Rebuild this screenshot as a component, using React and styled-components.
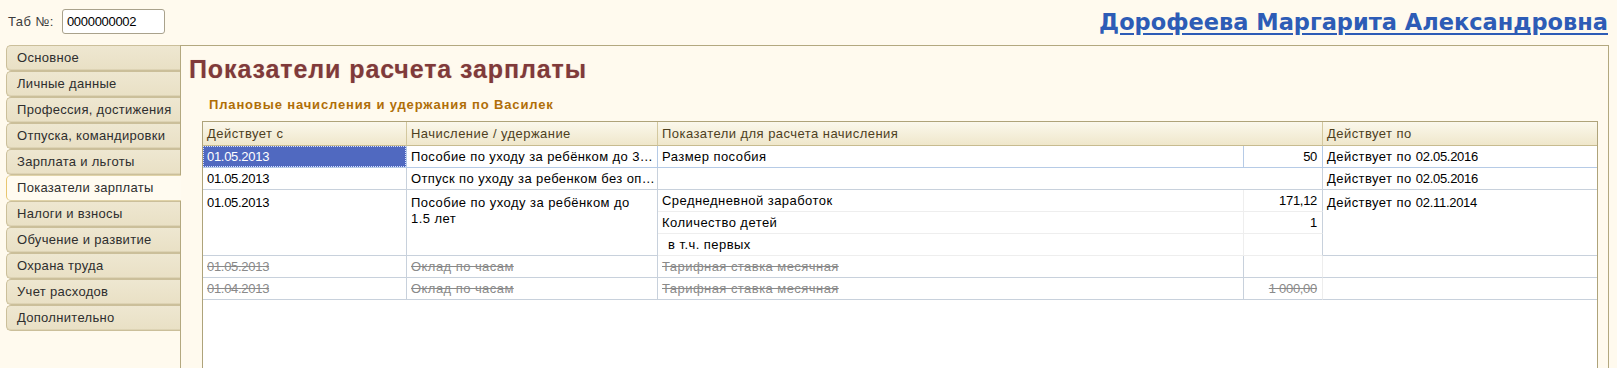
import styled, { createGlobalStyle, css } from 'styled-components'

const GlobalStyle = createGlobalStyle`
  html, body {
    margin: 0;
    padding: 0;
    background: #fffaee;
  }
  body {
    font-family: "Liberation Sans", Arial, sans-serif;
    font-size: 13px;
    letter-spacing: 0.45px;
    color: #000;
  }
`

const tabs = [
  'Основное',
  'Личные данные',
  'Профессия, достижения',
  'Отпуска, командировки',
  'Зарплата и льготы',
  'Показатели зарплаты',
  'Налоги и взносы',
  'Обучение и развитие',
  'Охрана труда',
  'Учет расходов',
  'Дополнительно'
]

const App = () => {
  return (
    <Page>
      <GlobalStyle />
      <TopBar>
        <TabNumber>
          <Label>Таб №:</Label>
          <NumberInput>0000000002</NumberInput>
        </TabNumber>
        <NameLink href="#">Дорофеева Маргарита Александровна</NameLink>
      </TopBar>

      <Main>
        <TabList>
          {tabs.map(t => (
            <Tab key={t} $active={t === 'Показатели зарплаты'}>{t}</Tab>
          ))}
        </TabList>

        <Panel>
          <Heading>Показатели расчета зарплаты</Heading>
          <SubHeading>Плановые начисления и удержания по Василек</SubHeading>

          <Table>
            <HeadCell>Действует с</HeadCell>
            <HeadCell>Начисление / удержание</HeadCell>
            <HeadCell $span={2}>Показатели для расчета начисления</HeadCell>
            <HeadCell $last>Действует по</HeadCell>

            {/* row 1 */}
            <Cell $selected $blue><SelText><Digits>01.05.2013</Digits></SelText></Cell>
            <Cell $blue $ellipsis>Пособие по уходу за ребёнком до 3 лет</Cell>
            <Cell $blue>Размер пособия</Cell>
            <Cell $blue $num><Digits>50</Digits></Cell>
            <Cell $blue $last>Действует по <Digits>02.05.2016</Digits></Cell>

            {/* row 2 */}
            <Cell><Digits>01.05.2013</Digits></Cell>
            <Cell $ellipsis>Отпуск по уходу за ребенком без оплаты</Cell>
            <Cell $span={2} />
            <Cell $last>Действует по <Digits>02.05.2016</Digits></Cell>

            {/* row 3 */}
            <Cell $rows={3}><Digits>01.05.2013</Digits></Cell>
            <Cell $rows={3} $wrap>Пособие по уходу за ребёнком до 1.5 лет</Cell>
            <Cell $sub>Среднедневной заработок</Cell>
            <Cell $sub $num><Digits>171,12</Digits></Cell>
            <Cell $rows={3} $last>Действует по <Digits>02.11.2014</Digits></Cell>
            <Cell $sub>Количество детей</Cell>
            <Cell $sub $num><Digits>1</Digits></Cell>
            <Cell $sub $indent>в т.ч. первых</Cell>
            <Cell $sub $num />

            {/* row 4 */}
            <Cell $struck><Digits>01.05.2013</Digits></Cell>
            <Cell $struck>Оклад по часам</Cell>
            <Cell $struck>Тарифная ставка месячная</Cell>
            <Cell $struck $num $light />
            <Cell $last />

            {/* row 5 */}
            <Cell $struck><Digits>01.04.2013</Digits></Cell>
            <Cell $struck>Оклад по часам</Cell>
            <Cell $struck>Тарифная ставка месячная</Cell>
            <Cell $struck $num $light><Digits>1 000,00</Digits></Cell>
            <Cell $last />

            <Filler />
          </Table>
        </Panel>
      </Main>
    </Page>
  )
}

const Page = styled.div`
  height: 368px;
  overflow: hidden;
`

const TopBar = styled.div`
  height: 45px;
  display: flex;
  align-items: flex-start;
  justify-content: space-between;
  padding: 0 9px 0 8px;
  box-sizing: border-box;
`

const TabNumber = styled.div`
  display: flex;
  align-items: center;
  gap: 8px;
  padding-top: 9px;
`

const Label = styled.span`
  font-size: 13px;
  color: #3c3c3c;
`

const NumberInput = styled.div`
  width: 103px;
  height: 25px;
  box-sizing: border-box;
  border: 1px solid #a9a28c;
  border-radius: 3px;
  background: #fff;
  padding: 0 4px;
  line-height: 23px;
  font-size: 13px;
  letter-spacing: -0.3px;
`

const NameLink = styled.a`
  margin-top: 8px;
  font-family: "DejaVu Sans", Verdana, sans-serif;
  font-weight: bold;
  font-size: 22.5px;
  line-height: 28px;
  letter-spacing: 0;
  color: #2d5cb6;
  text-decoration: underline;
  text-underline-offset: 3px;
`

const Main = styled.div`
  display: flex;
  padding-left: 6px;
`

const TabList = styled.div`
  width: 174px;
  flex: none;
  display: flex;
  flex-direction: column;
  position: relative;
  z-index: 1;
`

const Tab = styled.div`
  height: 26px;
  box-sizing: border-box;
  padding-left: 10px;
  line-height: 24px;
  font-size: 13px;
  letter-spacing: 0.3px;
  color: #2e2e2e;
  white-space: nowrap;
  background: linear-gradient(#eee7d1, #e9e0c5);
  border: 1px solid #cbbf9a;
  border-right: none;
  border-radius: 5px 0 0 5px;
  box-shadow: inset 0 -1px 0 #ddd3b4;

  ${p => p.$active && css`
    background: #fffbf0;
    border-color: #e0d3a8;
    border-left: 1px solid #e8c670;
    box-shadow: none;
    margin-right: -1px;
  `}
`

const Panel = styled.div`
  width: 1429px;
  height: 340px;
  box-sizing: border-box;
  border: 1px solid #b3a87f;
  background: #fffaee;
  display: flex;
  flex-direction: column;
  align-items: flex-start;
`

const Heading = styled.h1`
  margin: 8px 0 0 8px;
  font-size: 25px;
  line-height: 30px;
  font-weight: bold;
  letter-spacing: 0.9px;
  color: #803a3a;
  text-shadow: 0 0 1px rgba(128, 58, 58, 0.35);
`

const SubHeading = styled.h2`
  margin: 13px 0 0 28px;
  font-size: 13px;
  line-height: 16px;
  font-weight: bold;
  letter-spacing: 0.85px;
  color: #b06e08;
`

const Table = styled.div`
  margin: 8px 0 0 21px;
  width: 1396px;
  box-sizing: border-box;
  border: 1px solid #aea37a;
  border-bottom: none;
  background: #fff;
  display: grid;
  grid-template-columns: 204px 251px 586px 79px 1fr;
  grid-template-rows: 24px;
  grid-auto-rows: 22px;
  flex: 1;
`

const HeadCell = styled.div`
  grid-column: span ${p => p.$span || 1};
  background: linear-gradient(#fbf8ec, #efe7cb);
  border-bottom: 1px solid #c7bb8f;
  border-right: ${p => p.$last ? 'none' : '1px solid #d3c89f'};
  color: #4e3f1e;
  padding-left: 4px;
  line-height: 23px;
  white-space: nowrap;
  overflow: hidden;
`

const Cell = styled.div`
  grid-column: span ${p => p.$span || 1};
  grid-row: span ${p => p.$rows || 1};
  box-sizing: border-box;
  border-bottom: 1px solid ${p => p.$sub ? '#eeeeee' : p.$blue ? '#b6cbe6' : '#c8d1dc'};
  border-right: 1px solid ${p => p.$light ? '#ededed' : p.$blue ? '#b6cbe6' : '#c8d1dc'};
  padding: 3px 5px 0 ${p => p.$indent ? 10 : 4}px;
  line-height: 16px;
  white-space: nowrap;
  overflow: hidden;

  ${p => p.$last && css`border-right: none;`}
  ${p => p.$num && css`text-align: right;`}
  ${p => p.$ellipsis && css`
    text-overflow: ellipsis;
    padding-right: 1px;
    letter-spacing: 0.4px;
  `}
  ${p => p.$wrap && css`white-space: normal;`}
  ${p => p.$struck && css`
    color: #8a8a8a;
    text-decoration: line-through;
  `}
  ${p => p.$rows && p.$rows > 1 && css`
    border-bottom-color: #c8d1dc;
    padding-top: 5px;
  `}
  ${p => p.$sub && css`
    border-right-color: ${p.$num ? '#c8d1dc' : '#eeeeee'};
  `}
  ${p => p.$selected && css`
    background: #5069c0;
    padding: 0;
    border-bottom-color: #b6cbe6;
  `}
`

const Digits = styled.span`
  letter-spacing: -0.3px;
`

const SelText = styled.div`
  height: 100%;
  box-sizing: border-box;
  border: 1px dotted #d8e2ff;
  color: #fff;
  padding: 2px 3px 0;
  line-height: 16px;
`

const Filler = styled.div`
  grid-column: 1 / -1;
  height: 80px;
`

export default App
